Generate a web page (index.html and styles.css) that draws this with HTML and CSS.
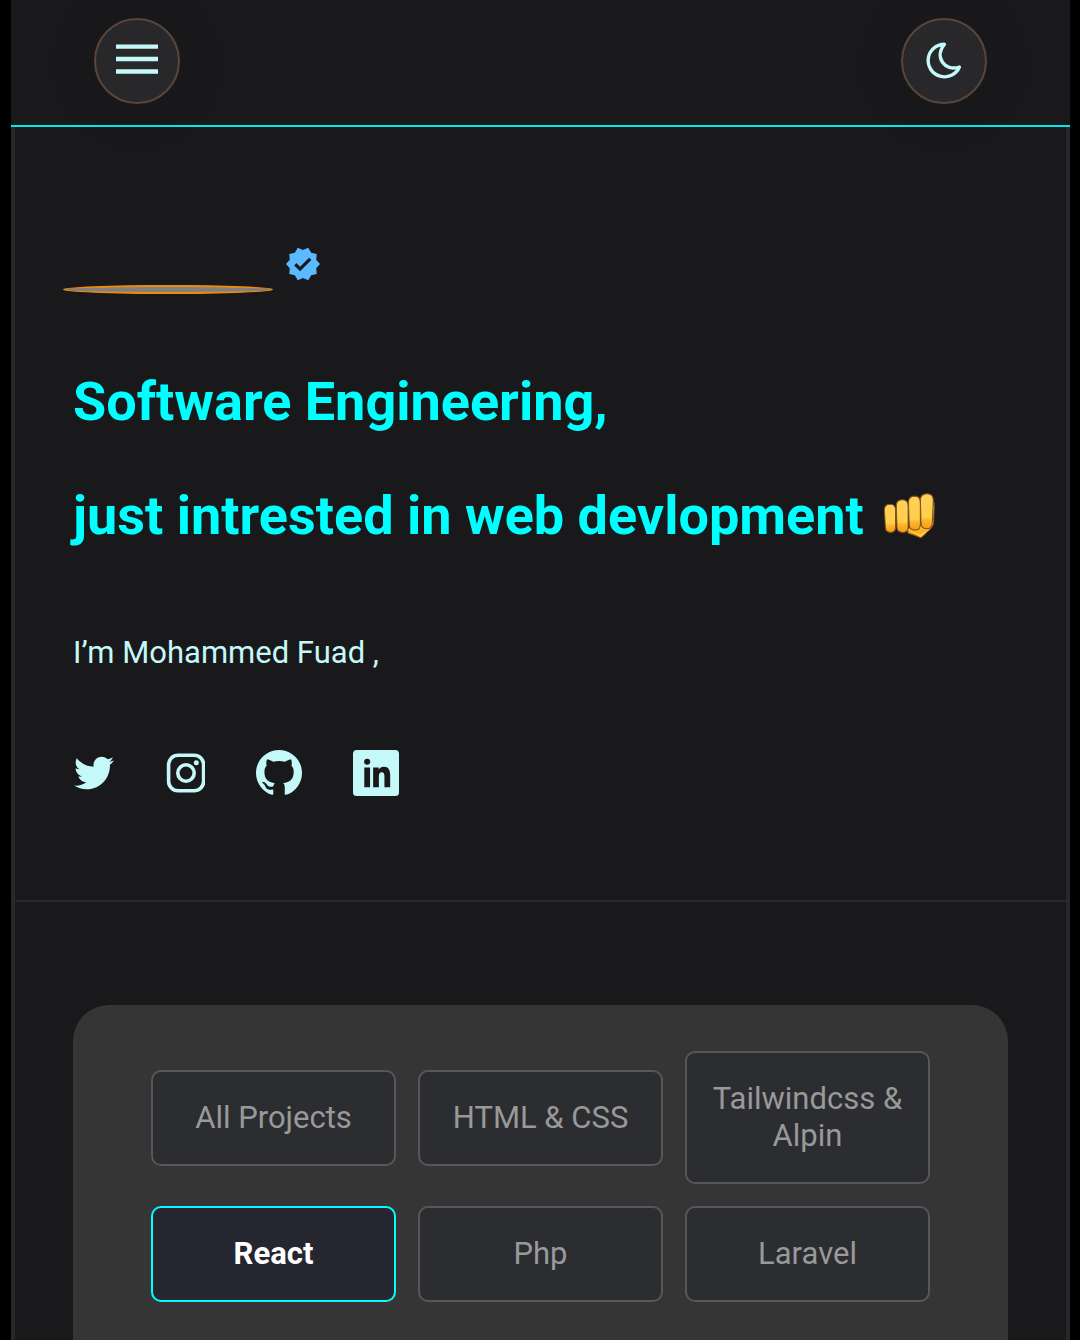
FILE: index.html
```html
<!DOCTYPE html>
<html lang="en">
<head>
<meta charset="utf-8">
<meta name="viewport" content="width=device-width, initial-scale=1">
<title>Mohammed Fuad</title>
<link rel="stylesheet" href="styles.css">
</head>
<body>
<div class="page">
  <header class="topbar">
    <button class="round-btn" type="button" aria-label="Open menu">
      <svg class="menu-icon" viewBox="0 0 42 34" aria-hidden="true"><path d="M0 2.6h42M0 15h42M0 27.5h42"/></svg>
    </button>
    <button class="round-btn" type="button" aria-label="Switch theme">
      <svg class="moon-icon" viewBox="0 0 36 36" aria-hidden="true"><path d="M18.4 1.2A16.3 16.3 0 1 0 33.4 24C18.6 28.8 8 14 18.4 1.2z"/></svg>
    </button>
  </header>
  <main class="content">
    <section class="hero">
      <div class="profile">
        <span class="avatar"></span>
        <svg class="verified" viewBox="1 1 22 22" role="img" aria-label="Verified"><path d="M23 12l-2.44-2.79.34-3.69-3.61-.82-1.89-3.2L12 2.96 8.6 1.5 6.71 4.69 3.1 5.5l.34 3.7L1 12l2.44 2.79-.34 3.7 3.61.82L8.6 22.5l3.4-1.47 3.4 1.46 1.89-3.19 3.61-.82-.34-3.69L23 12zm-12.91 4.72l-3.8-3.81 1.48-1.48 2.32 2.33 5.85-5.87 1.48 1.48-7.33 7.35z"/></svg>
      </div>
      <h1 class="title">Software Engineering,<br>just intrested in web devlopment
        <svg class="fist" viewBox="69 41 156 135" role="img" aria-label="Fist">
          <defs><linearGradient id="skin" x1="0" y1="0" x2="0" y2="1"><stop offset="0" stop-color="#ffd057"/><stop offset=".68" stop-color="#ffcf4c"/><stop offset=".74" stop-color="#ffb929"/><stop offset="1" stop-color="#f79a16"/></linearGradient></defs>
          <g fill="url(#skin)" stroke="#80501f" stroke-width="3">
            <path d="M140 145l3 14q22 6 37 14 12-9 20-19 16-12 18-25l2-60-30 60z"/>
            <path d="M73 91q0-17 17-17 16 0 16 17v50q0 16-14 16-16 0-16-16z"/>
            <path d="M108 79q0-18 18-18 17 0 17 18v62q0 16-15 16-18 0-18-16z"/>
            <path d="M144 69q0-19 18-19 17 0 17 19v64q0 17-15 17-18 0-18-17z"/>
            <path d="M179 63q0-20 20-20 18 0 18 20l-3 66q-1 17-15 17-18 0-18-17z"/>
          </g>
          <path d="M148 153l31 9 30-16-29 24z" fill="#ffd04d"/>
        </svg>
      </h1>
      <p class="intro">I’m Mohammed Fuad ,</p>
      <nav class="social" aria-label="Social profiles">
        <a href="#" aria-label="Twitter"><svg class="icon-small" viewBox="0 0 512 512"><path d="M459.37 151.716c.325 4.548.325 9.097.325 13.645 0 138.72-105.583 298.558-298.558 298.558-59.452 0-114.68-17.219-161.137-47.106 8.447.974 16.568 1.299 25.34 1.299 49.055 0 94.213-16.568 130.274-44.832-46.132-.975-84.792-31.188-98.112-72.772 6.498.974 12.995 1.624 19.818 1.624 9.421 0 18.843-1.3 27.614-3.573-48.081-9.747-84.143-51.98-84.143-102.985v-1.299c13.969 7.797 30.214 12.67 47.431 13.319-28.264-18.843-46.781-51.005-46.781-87.391 0-19.492 5.197-37.36 14.294-52.954 51.655 63.675 129.3 105.258 216.365 109.807-1.624-7.797-2.599-15.918-2.599-24.04 0-57.828 46.782-104.934 104.934-104.934 30.213 0 57.502 12.67 76.67 33.137 23.715-4.548 46.456-13.32 66.599-25.34-7.798 24.366-24.366 44.833-46.132 57.827 21.117-2.273 41.584-8.122 60.426-16.243-14.292 20.791-32.161 39.308-52.628 54.253z"/></svg></a>
        <a href="#" aria-label="Instagram"><svg class="icon-small" viewBox="0 0 40 40"><rect x="3.6" y="2.2" width="35" height="35.6" rx="9.5" fill="none" stroke="currentColor" stroke-width="3.6"/><circle cx="21" cy="20" r="8.2" fill="none" stroke="currentColor" stroke-width="3.6"/><circle cx="31.3" cy="9.7" r="2.5"/></svg></a>
        <a href="#" aria-label="GitHub"><svg class="icon-large" viewBox="0 0 16 16"><path d="M8 0C3.58 0 0 3.58 0 8c0 3.54 2.29 6.53 5.47 7.59.4.07.55-.17.55-.38 0-.19-.01-.82-.01-1.49-2.01.37-2.53-.49-2.69-.94-.09-.23-.48-.94-.82-1.13-.28-.15-.68-.52-.01-.53.63-.01 1.08.58 1.23.82.72 1.21 1.87.87 2.33.66.07-.52.28-.87.51-1.07-1.78-.2-3.64-.89-3.64-3.95 0-.87.31-1.59.82-2.15-.08-.2-.36-1.02.08-2.12 0 0 .67-.21 2.2.82.64-.18 1.32-.27 2-.27s1.36.09 2 .27c1.53-1.04 2.2-.82 2.2-.82.44 1.1.16 1.92.08 2.12.51.56.82 1.27.82 2.15 0 3.07-1.87 3.75-3.65 3.95.29.25.54.73.54 1.48 0 1.07-.01 1.93-.01 2.2 0 .21.15.46.55.38A8.01 8.01 0 0 0 16 8c0-4.42-3.58-8-8-8"/></svg></a>
        <a href="#" aria-label="LinkedIn"><svg class="icon-large" viewBox="0 0 24 24"><path fill-rule="evenodd" d="M2 0h20a2 2 0 0 1 2 2v20a2 2 0 0 1-2 2H2a2 2 0 0 1-2-2V2a2 2 0 0 1 2-2zM5.9 9.1v10.3h3V9.1zM7.4 4.5a1.6 1.6 0 1 0 0 3.2 1.6 1.6 0 0 0 0-3.2zM10.5 9.1v10.3h3V14c0-1.4.3-2.4 1.5-2.4s1.4 1 1.4 2.3v5.5h3v-6.1c0-2.8-.9-4.5-3.2-4.5-1.4 0-2.3.7-2.8 1.5V9.1z"/></svg></a>
      </nav>
    </section>
    <section class="projects">
      <div class="filters">
        <button class="filter" type="button">All Projects</button>
        <button class="filter" type="button">HTML &amp; CSS</button>
        <button class="filter" type="button">Tailwindcss &amp; Alpin</button>
        <button class="filter filter-active" type="button" aria-pressed="true">React</button>
        <button class="filter" type="button">Php</button>
        <button class="filter" type="button">Laravel</button>
      </div>
    </section>
  </main>
</div>
</body>
</html>
```
FILE: styles.css
```css
* { box-sizing: border-box; }

body {
  margin: 0;
  background: #000;
  color: #c5f8f8;
  font-family: Roboto, sans-serif;
}

svg { display: block; }

.page {
  display: flex;
  flex-direction: column;
  min-height: 100vh;
  margin: 0 10px 0 11px;
  background: #19191b;
}

.topbar {
  display: flex;
  justify-content: space-between;
  padding: 18px 83px 21px;
  border-bottom: 2px solid #00eaed;
}

.round-btn {
  display: flex;
  align-items: center;
  justify-content: center;
  width: 86px;
  height: 86px;
  padding: 0;
  border: 2px solid #5a4639;
  border-radius: 50%;
  background: #28282a;
  box-shadow: 0 4px 60px rgba(0, 0, 0, 0.08);
  color: inherit;
}

.menu-icon {
  width: 42px;
  height: 34px;
  stroke: currentColor;
  stroke-width: 4.4;
}

.moon-icon {
  width: 36px;
  height: 36px;
  overflow: visible;
  fill: none;
  stroke: currentColor;
  stroke-width: 3.4;
  stroke-linejoin: round;
}

.content {
  flex: 1;
  display: flex;
  flex-direction: column;
  border: solid #28282b;
  border-width: 0 4px;
}

.hero {
  padding: 120px 58px 104px;
  border-bottom: 2px solid #28282b;
}

.profile {
  display: flex;
  gap: 13px;
  height: 47px;
  margin-left: -10px;
}

.avatar {
  align-self: flex-end;
  width: 210px;
  height: 9px;
  border: 2px solid #f08a08;
  border-radius: 50%;
  background: #808080;
}

.verified {
  width: 34px;
  height: 34px;
  fill: #5ab9ff;
}

.title {
  margin: 51px 0 61px;
  color: #0ff;
  font-size: 54px;
  font-weight: 700;
  line-height: 114px;
}

.fist {
  display: inline-block;
  width: 53px;
  height: 46px;
  margin-left: 6px;
  vertical-align: -5px;
}

.intro {
  margin: 0 0 79px;
  font-size: 31px;
  line-height: 37px;
}

.social {
  display: flex;
  align-items: center;
  gap: 51px;
  padding-left: 1px;
}

.social a { color: inherit; }

.social svg { fill: currentColor; }

.icon-small {
  width: 40px;
  height: 40px;
}

.icon-large {
  width: 46px;
  height: 46px;
}

.projects {
  flex: 1;
  display: flex;
  flex-direction: column;
  padding: 103px 58px 0;
}

.filters {
  flex: 1;
  display: grid;
  grid-template-columns: repeat(3, 1fr);
  align-items: center;
  align-content: start;
  gap: 22px;
  padding: 46px 78px 38px;
  border-radius: 36px 36px 0 0;
  background: #353535;
}

.filter {
  padding: 27px 20px 28px;
  border: 2px solid #575757;
  border-radius: 10px;
  background: #2c2d31;
  color: #999;
  font-family: inherit;
  font-size: 31px;
  line-height: 37px;
}

.filter-active {
  border-color: #0ff;
  background: #262630;
  color: #fff;
  font-weight: 700;
}
```
